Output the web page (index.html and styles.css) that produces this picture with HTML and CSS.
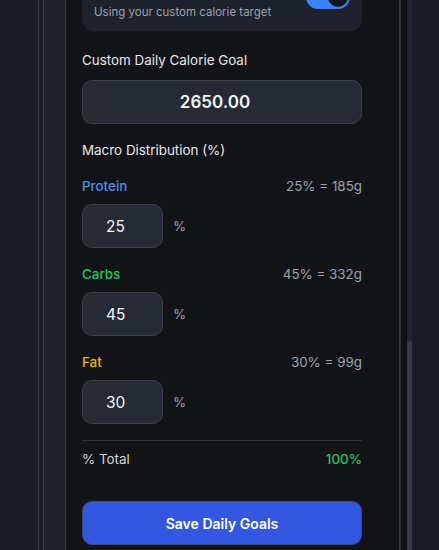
FILE: index.html
```html
<!DOCTYPE html>
<html lang="en">
<head>
<meta charset="utf-8">
<title>Daily Goals</title>
<link rel="stylesheet" href="styles.css">
</head>
<body>
<div class="outer">
  <div class="rail"></div>
  <main class="content">
    <div class="toggle-card">
      <div class="toggle-sub">Using your custom calorie target</div>
      <div class="switch"><span class="knob"></span></div>
    </div>

    <div class="field-label">Custom Daily Calorie Goal</div>
    <div class="big-input">2650.00</div>

    <div class="section-label">Macro Distribution (%)</div>

    <div class="macro">
      <div class="macro-head">
        <span class="macro-name protein">Protein</span>
        <span class="macro-calc">25% = 185g</span>
      </div>
      <div class="macro-input-row">
        <div class="small-input">25</div>
        <span class="unit">%</span>
      </div>
    </div>

    <div class="macro">
      <div class="macro-head">
        <span class="macro-name carbs">Carbs</span>
        <span class="macro-calc">45% = 332g</span>
      </div>
      <div class="macro-input-row">
        <div class="small-input">45</div>
        <span class="unit">%</span>
      </div>
    </div>

    <div class="macro">
      <div class="macro-head">
        <span class="macro-name fat">Fat</span>
        <span class="macro-calc">30% = 99g</span>
      </div>
      <div class="macro-input-row">
        <div class="small-input">30</div>
        <span class="unit">%</span>
      </div>
    </div>

    <div class="total">
      <span class="total-label">% Total</span>
      <span class="total-value">100%</span>
    </div>

    <button class="save">Save Daily Goals</button>
  </main>
  <div class="gap"></div>
  <div class="scrollbar"><div class="thumb"></div></div>
</div>
</body>
</html>
```

FILE: styles.css
```css
html, body {
  margin: 0;
  height: 550px;
  overflow: hidden;
}
body {
  background: #1a1b25;
  font-family: Inter, "Noto Sans", sans-serif;
  display: flex;
}
.outer {
  margin-left: 38px;
  border-left: 1px solid #373b46;
  padding-left: 4px;
  background: #1c1e27;
  display: flex;
  height: 550px;
}
.rail {
  width: 21px;
  background: #1f232c;
  border-left: 1px solid #354158;
  border-right: 1px solid #363a45;
}
.content {
  width: 280px;
  background: #131418;
  padding: 0 37px 0 16px;
  border-right: 1px solid #393d48;
  display: flex;
  flex-direction: column;
  overflow: hidden;
}
.content > * {
  flex-shrink: 0;
}
.toggle-card {
  margin-top: -29px;
  background: #1e222b;
  border-radius: 12px;
  padding: 14px 12px 11px;
  display: flex;
  align-items: flex-end;
  justify-content: space-between;
}
.toggle-sub {
  color: #9ca3af;
  font-size: 11.5px;
  line-height: 16px;
}
.switch {
  width: 44px;
  height: 24px;
  border-radius: 12px;
  background: #3b82f6;
  position: relative;
  margin-bottom: 11px;
}
.knob {
  position: absolute;
  right: 2px;
  top: 2px;
  width: 20px;
  height: 20px;
  border-radius: 50%;
  background: #131418;
}
.field-label, .section-label {
  color: #e5e7eb;
  font-size: 13.4px;
  line-height: 20px;
}
.field-label {
  margin-top: 19px;
}
.big-input {
  margin-top: 10px;
  height: 42px;
  padding-right: 14px;
  border: 1px solid #3a3f4a;
  background: #262a33;
  border-radius: 10px;
  color: #f3f4f6;
  font-size: 17px;
  font-weight: 600;
  display: flex;
  align-items: center;
  justify-content: center;
}
.section-label {
  margin-top: 16px;
}
.macro {
  margin-top: 16px;
  display: flex;
  flex-direction: column;
  gap: 8px;
}
.macro-head {
  display: flex;
  justify-content: space-between;
  font-size: 13.4px;
  line-height: 20px;
}
.macro-name {
  font-weight: 500;
}
.protein { color: #4d8fe8; }
.carbs { color: #22c55e; }
.fat { color: #eab308; }
.macro-calc {
  color: #9ca3af;
}
.macro-input-row {
  display: flex;
  align-items: center;
  gap: 10px;
}
.small-input {
  width: 56px;
  height: 42px;
  padding-left: 23px;
  border: 1px solid #3a3f4a;
  background: #262a33;
  border-radius: 10px;
  color: #f3f4f6;
  font-size: 15.5px;
  font-weight: 400;
  display: flex;
  align-items: center;
  box-sizing: content-box;
}
.unit {
  color: #9ca3af;
  font-size: 13.4px;
}
.total {
  margin-top: 16px;
  border-top: 1px solid #2e323c;
  padding-top: 8px;
  display: flex;
  justify-content: space-between;
  font-size: 13.4px;
  line-height: 20px;
}
.total-label { color: #d1d5db; }
.total-value { color: #22c55e; font-weight: 500; }
.save {
  margin-top: 32px;
  height: 44px;
  border: 1px solid #3a4a86;
  background: #3357e0;
  border-radius: 10px;
  color: #ffffff;
  font-family: inherit;
  font-size: 14px;
  font-weight: 600;
}
.gap {
  width: 6px;
  background: #121315;
  border-left: 1px solid #2c3039;
}
.scrollbar {
  width: 5px;
  background: #22252e;
  display: flex;
  flex-direction: column;
  padding-top: 341px;
}
.thumb {
  flex: 1;
  background: #343944;
  border-radius: 2px 2px 0 0;
}
```
